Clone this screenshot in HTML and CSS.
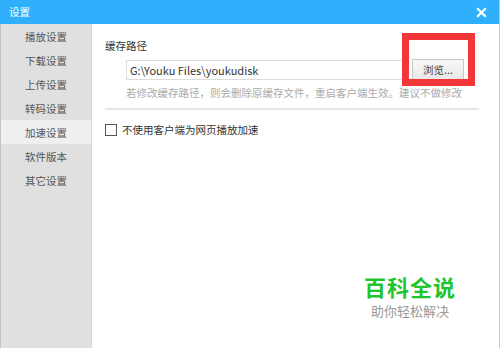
FILE: index.html
```html
<!doctype html>
<html lang="zh-CN">
<head>
    <meta charset="UTF-8">
    <title>设置</title>
    <link rel="stylesheet" href="styles.css">
</head>
<body>
<div class="window">
    <div class="titlebar">
        <span class="title">设置</span>
        <svg class="close" width="11" height="11" viewBox="0 0 11 11">
            <path d="M1.2 1.2 L9.8 9.8 M9.8 1.2 L1.2 9.8" stroke="#fff" stroke-width="2.2"/>
        </svg>
    </div>
    <div class="main">
        <!-- 左侧菜单 -->
        <ul class="menu">
            <li>播放设置</li>
            <li>下载设置</li>
            <li>上传设置</li>
            <li>转码设置</li>
            <li class="active">加速设置</li>
            <li>软件版本</li>
            <li>其它设置</li>
        </ul>
        <div class="content">
            <div class="label">缓存路径</div>
            <div class="path-row">
                <div class="path-input">G:\Youku Files\youkudisk</div>
                <div class="browse-wrap">
                    <button class="browse">浏览...</button>
                    <span class="mark"></span>
                </div>
            </div>
            <div class="hint">若修改缓存路径，则会删除原缓存文件，重启客户端生效。建议不做修改</div>
            <div class="sep"></div>
            <label class="check"><span class="box"></span>不使用客户端为网页播放加速</label>
            <div class="watermark">
                <div class="wm-big">百科全说</div>
                <div class="wm-small">助你轻松解决</div>
            </div>
        </div>
    </div>
</div>
</body>
</html>
```
FILE: styles.css
```css
html, body{
    margin: 0;
    padding: 0;
    height: 100%;
}
body{
    font-family: "Noto Sans CJK SC", "Liberation Sans", sans-serif;
    font-size: 10.5px;
    color: #333;
    background: #fff;
}
.window{
    height: 348px;
    display: flex;
    flex-direction: column;
    border-right: 1px solid #c8c8c8;
    box-sizing: border-box;
}
.titlebar{
    height: 24px;
    background-color: #30b0fc;
    display: flex;
    align-items: center;
    justify-content: space-between;
    padding: 0 12px 0 9px;
    color: #fff;
}
.title{
    line-height: 24px;
}
.close{
    display: block;
}
.main{
    flex: 1;
    display: flex;
}
.menu{
    list-style: none;
    margin: 0;
    padding: 0;
    width: 90px;
    background-color: #e0e0e0;
    border-left: 1px solid #c4c4c4;
    border-right: 1px solid #d8d8d8;
}
.menu li{
    height: 24px;
    line-height: 25px;
    text-align: center;
    color: #555;
}
.menu li.active{
    background-color: #efefef;
}
.content{
    flex: 1;
    padding: 12px 13px 0 13px;
    position: relative;
}
.label{
    line-height: 16px;
    margin-top: 2px;
}
.path-row{
    display: flex;
    align-items: center;
    margin: 5px 0 0 21px;
}
.path-input{
    width: 272px;
    height: 18px;
    line-height: 18px;
    border: 1px solid #dcdcdc;
    padding: 0 3px;
    color: #333;
    font-size: 11px;
}
.browse-wrap{
    position: relative;
    margin-left: 6px;
}
.browse{
    width: 52px;
    height: 21px;
    border: 1px solid #c8c8c8;
    background: linear-gradient(#f8f8f8, #e8e8e8);
    font-family: inherit;
    font-size: 10.5px;
    color: #444;
    padding: 0;
    display: block;
}
/* 红色标注框 */
.mark{
    position: absolute;
    left: -10px;
    top: -26px;
    width: 59px;
    height: 39px;
    border: 7px solid #f2363a;
}
.hint{
    margin: 5px 0 0 21px;
    color: #aaa;
    line-height: 16px;
    white-space: nowrap;
}
.sep{
    height: 2px;
    background: #e6e6e6;
    margin: 7px 7px 0 0;
}
.check{
    display: flex;
    align-items: center;
    margin-top: 12px;
    line-height: 16px;
}
.box{
    width: 10px;
    height: 10px;
    border: 1px solid #555;
    margin-right: 5px;
    background: #fff;
}
.watermark{
    position: absolute;
    left: 272px;
    top: 250px;
    text-align: center;
}
.wm-big{
    font-size: 22px;
    font-weight: bold;
    color: #1fc52f;
    line-height: 24px;
    letter-spacing: 1px;
}
.wm-small{
    font-size: 13px;
    color: #999;
    line-height: 15px;
    margin-top: 5px;
}
```
